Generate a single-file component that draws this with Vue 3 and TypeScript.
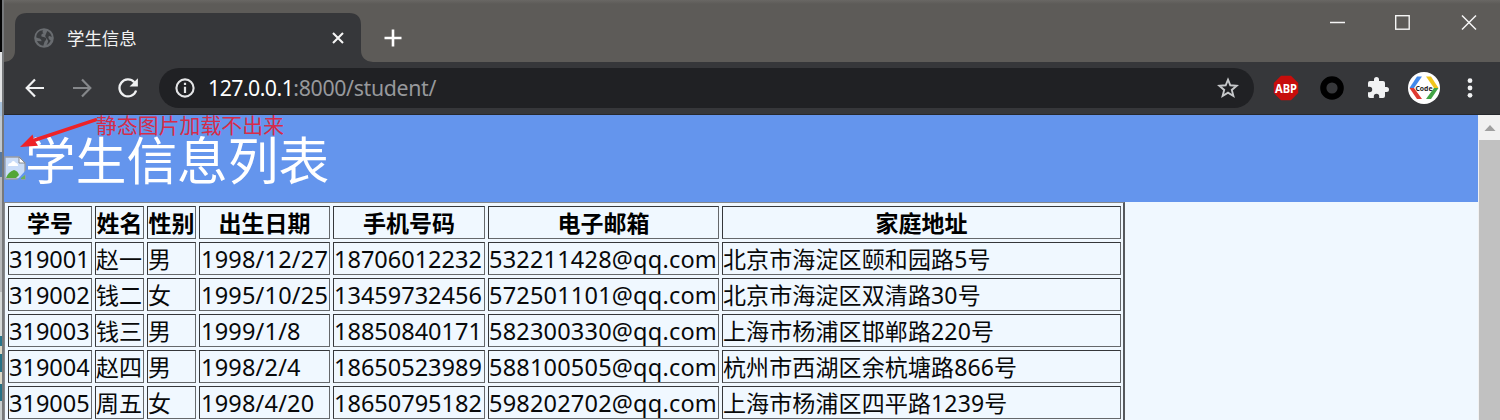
<script setup lang="ts">
interface Student {
  id: string
  name: string
  sex: string
  birth: string
  phone: string
  mail: string
  address: string
}

const headers: string[] = ['学号', '姓名', '性别', '出生日期', '手机号码', '电子邮箱', '家庭地址']

const students: Student[] = [
  { id: '319001', name: '赵一', sex: '男', birth: '1998/12/27', phone: '18706012232', mail: '532211428@qq.com', address: '北京市海淀区颐和园路5号' },
  { id: '319002', name: '钱二', sex: '女', birth: '1995/10/25', phone: '13459732456', mail: '572501101@qq.com', address: '北京市海淀区双清路30号' },
  { id: '319003', name: '钱三', sex: '男', birth: '1999/1/8', phone: '18850840171', mail: '582300330@qq.com', address: '上海市杨浦区邯郸路220号' },
  { id: '319004', name: '赵四', sex: '男', birth: '1998/2/4', phone: '18650523989', mail: '588100505@qq.com', address: '杭州市西湖区余杭塘路866号' },
  { id: '319005', name: '周五', sex: '女', birth: '1998/4/20', phone: '18650795182', mail: '598202702@qq.com', address: '上海市杨浦区四平路1239号' },
]
</script>

<template>
  <div class="screen">
    <div class="edge">
      <i class="e-black"></i><i class="e-white"></i><i class="e-sky"></i><i class="e-pale"></i>
      <i class="e-blue"></i><i class="e-gray"></i><i class="e-mist"></i><i class="e-teal"></i>
    </div>
    <div class="window">
      <div class="tabs">
        <svg class="tab-shape" width="372" height="62" viewBox="0 0 372 62">
          <path d="M0 62Q11 61 11 50V25Q11 13 23 13H345Q357 13 357 25V50Q357 61 369 62Z" fill="#36373a" />
        </svg>
        <div class="tab">
          <svg class="globe" width="20" height="20" viewBox="0 0 20 20">
            <circle cx="10" cy="10" r="9.8" fill="#696c70" />
            <path d="M2.3 9.4C2 5.500 5 2.300 9.300 2.200C8.200 3.200 8.300 4.600 9.600 5.200C7.700 5.500 7 6.700 7.500 8.500L10.400 9.300C12.500 9.800 12.800 11.200 11.600 12.500C10.200 13.400 10.300 15.300 9.300 17.700C6.600 17.500 4.100 15.700 3 13L7.500 13.200C7.600 11.500 6.300 10.400 4.500 10.200ZM13.200 3.100C15.800 4.300 17.500 6.600 17.700 9.200L15.900 8.100C14.700 7.900 14.200 8.700 14.500 10.100C14.800 11.400 15.700 11.800 16.700 12.500C15.800 14.600 14.500 16 12.500 17C13.600 14.800 14.600 13.900 13.700 12.100C13 10.700 11.500 9.500 11.200 7.800Z" fill="#393b3e" />
          </svg>
          <span class="tab-title">学生信息</span>
          <svg width="12" height="12" viewBox="0 0 12 12"><path d="M1 1L11 11M11 1L1 11" stroke="#f5f5f5" stroke-width="2.100" /></svg>
        </div>
        <svg class="plus" width="18" height="18" viewBox="0 0 18 18"><path d="M9 .5V17.500M.5 9H17.500" stroke="#fff" stroke-width="2.600" /></svg>
        <svg class="controls" width="150" height="18" viewBox="0 0 150 18">
          <path d="M1 9.500H16" stroke="#f5f5f5" stroke-width="1.500" />
          <rect x="66.700" y="2.700" width="13.500" height="13.500" fill="none" stroke="#f5f5f5" stroke-width="1.400" />
          <path d="M133 2.500L147 16.500M147 2.500L133 16.500" stroke="#f5f5f5" stroke-width="1.500" />
        </svg>
      </div>

      <div class="toolbar">
        <svg class="back" width="20" height="20" viewBox="0 0 20 20"><path d="M19 10H2M10 1.500L1.700 10L10 18.500" fill="none" stroke="#f0f1f2" stroke-width="2.200" /></svg>
        <svg class="forward" width="20" height="20" viewBox="0 0 20 20"><path d="M1 10H18M10 1.500L18.300 10L10 18.500" fill="none" stroke="#85878a" stroke-width="2.200" /></svg>
        <svg class="reload" width="20" height="20" viewBox="0 0 20 20">
          <path d="M16.300 4.200A8.500 8.500 0 1 0 18.100 12.500" fill="none" stroke="#f0f1f2" stroke-width="2.300" />
          <path d="M19.900 .3V8.600H11.600Z" fill="#f0f1f2" />
        </svg>
        <div class="omnibox">
          <svg width="20" height="20" viewBox="0 0 20 20">
            <circle cx="10" cy="10" r="8.600" fill="none" stroke="#e3e4e6" stroke-width="2.100" />
            <path d="M10 4.800V7M10 8.800V15" stroke="#e3e4e6" stroke-width="2.200" />
          </svg>
          <span class="url"><b>127.0.0.1</b>:8000/student/</span>
          <svg width="22" height="22" viewBox="0 0 22 22"><path d="M11 2.700L13.300 8.300L19.700 8.800L14.800 12.900L16.400 19L11 15.700L5.600 19L7.200 12.900L2.300 8.800L8.700 8.300Z" fill="none" stroke="#c6c8ca" stroke-width="1.900" /></svg>
        </div>
        <svg class="abp" width="26" height="26" viewBox="0 0 26 26">
          <path d="M8 .8H18L25.200 8V18L18 25.200H8L.8 18V8Z" fill="#c70d0b" />
          <text x="13" y="17.500" text-anchor="middle" textLength="22" lengthAdjust="spacingAndGlyphs" font-size="12.500" font-weight="700" fill="#fff">ABP</text>
        </svg>
        <svg class="ring" width="24" height="24" viewBox="0 0 24 24"><circle cx="12" cy="12" r="8.700" fill="#36373a" stroke="#000" stroke-width="6.200" /></svg>
        <svg class="puzzle" width="24" height="24" viewBox="0 0 24 24">
          <path d="M20.500 11H19V7a2 2 0 0 0-2-2h-4V3.500a2.500 2.500 0 0 0-5 0V5H4a2 2 0 0 0-2 2v3.800h1.500a2.700 2.700 0 0 1 0 5.400H2V20a2 2 0 0 0 2 2h3.800v-1.500a2.700 2.700 0 0 1 5.400 0V22H17a2 2 0 0 0 2-2v-4h1.500a2.500 2.500 0 0 0 0-5z" fill="#f1f2f3" />
        </svg>
        <svg class="avatar" width="32" height="32" viewBox="0 0 32 32">
          <circle cx="16" cy="16" r="16" fill="#fff" />
          <path d="M9 4.500H14L6 16H1.500Z" fill="#4189eb" />
          <path d="M1.500 16H6L14 27H9Z" fill="#df3a31" />
          <path d="M18 4.500H23L30.500 16H26Z" fill="#f0c51b" />
          <path d="M30.500 16H26L18 27H23Z" fill="#42a445" />
          <text x="16" y="18.600" text-anchor="middle" textLength="17" lengthAdjust="spacingAndGlyphs" font-size="7.500" font-weight="700" fill="#222">Code</text>
        </svg>
        <svg class="dots" width="6" height="20" viewBox="0 0 6 20"><circle cx="3" cy="2.700" r="2.400" /><circle cx="3" cy="10" r="2.400" /><circle cx="3" cy="17.300" r="2.400" /></svg>
      </div>

      <div class="viewport">
        <main class="page">
          <header class="banner">
            <svg class="broken" width="22" height="24" viewBox="0 0 22 24">
              <path d="M1 1H15L21 7V23H1Z" fill="#c9dcf8" stroke="#9a9da2" stroke-width="1.300" />
              <path d="M4 10Q4 7 7 7Q9 3 12 7Q14 7 14 10Z" fill="#fff" />
              <path d="M2 22Q4 16 10 14Q14 15 15 19L12 22Z" fill="#53a638" />
              <path d="M15 1V7H21Z" fill="#fff" stroke="#888b90" />
              <path d="M13 24L22 14V18L17 24Z" fill="#6495ed" />
              <path d="M17 22L21 19V23H17Z" fill="#6bb15a" />
            </svg>
            <h1>学生信息列表</h1>
            <div class="note">静态图片加载不出来</div>
            <svg class="arrow" width="82" height="34" viewBox="0 0 82 34">
              <path d="M77.500 2.800L17 23" stroke="#ee2228" stroke-width="3.500" stroke-linecap="round" />
              <path d="M2 30L14.500 17.500L16 23L20 28.800Z" fill="#ee2228" />
            </svg>
          </header>
          <div class="table">
            <div v-for="h in headers" :key="h" class="cell head">{{ h }}</div>
            <template v-for="s in students" :key="s.id">
              <div class="cell latin">{{ s.id }}</div>
              <div class="cell">{{ s.name }}</div>
              <div class="cell">{{ s.sex }}</div>
              <div class="cell latin birth">{{ s.birth }}</div>
              <div class="cell latin">{{ s.phone }}</div>
              <div class="cell latin mail">{{ s.mail }}</div>
              <div class="cell address">{{ s.address }}</div>
            </template>
          </div>
        </main>
        <div class="scrollbar">
          <svg width="22" height="25" viewBox="0 0 22 25"><path d="M6.500 16L12 10L17.500 16Z" fill="#a0a0a0" /></svg>
          <div class="thumb"></div>
        </div>
      </div>
    </div>
  </div>
</template>

<style>
body { margin: 0; overflow: hidden; }
</style>

<style scoped>
* { box-sizing: border-box; }
svg { display: block; flex: none; }
.screen { display: flex; width: 1500px; height: 420px; overflow: hidden; font-family: "Noto Sans", "Noto Sans CJK SC", sans-serif; }
.edge { width: 4px; flex: none; display: flex; flex-direction: column; border-right: 2px solid #77797b; }
.edge i { display: block; }
.e-black { height: 52px; background: #050505; }
.e-white { height: 50px; background: #e3e4e5; }
.e-sky { height: 14px; background: #a9c3dd; }
.e-pale { height: 36px; background: #c0c8d0; }
.e-blue { height: 25px; background: #58789e; }
.e-gray { height: 115px; background: #b8babc; }
.e-mist { height: 44px; background: #d6dad9; }
.e-teal { height: 84px; background: linear-gradient(#28758b 0 10px, #ddd9c8 10px 18px, #267186 18px 36px, #ddd9c8 36px 48px, #267186 48px 65px, #c8cecf 65px); }
.window { width: 1496px; flex: none; }
.tabs { position: relative; height: 62px; display: flex; background: linear-gradient(#696764 0, #5d5b58 4px, #5d5b58 100%); }
.tab-shape { position: absolute; left: 0; bottom: 0; }
.tab { position: relative; width: 357px; height: 49px; margin-top: 13px; padding: 0 17px 0 30px; display: flex; align-items: center; }
.tab-title { flex: 1; margin-left: 13px; color: #f2f2f2; font-size: 17.4px; line-height: 24px; }
.plus { margin: 29px 0 0 23px; }
.controls { margin: 13px 21px 0 auto; }
.toolbar { height: 53px; display: flex; align-items: center; padding: 0 0 1px 21px; background: #36373a; border-bottom: 1px solid #26282c; }
.forward { margin-left: 27px; }
.reload { margin-left: 26px; }
.omnibox { width: 1095px; height: 40px; flex: none; margin-left: 21px; padding: 0 15px 0 16px; border-radius: 20px; background: #202124; display: flex; align-items: center; }
.url { flex: 1; margin-left: 13px; font-size: 21.3px; line-height: 30px; color: #97999c; letter-spacing: -.32px; }
.url b { font-weight: 400; color: #fff; letter-spacing: -.55px; }
.abp { margin-left: 19px; }
.ring { margin-left: 21px; }
.puzzle { margin-left: 22px; }
.avatar { margin-left: 18px; }
.dots { margin-left: 27px; fill: #f1f2f3; }
.viewport { display: flex; height: 305px; }
.page { width: 1474px; flex: none; background: #f0f8ff; }
.banner { position: relative; height: 87px; display: flex; background: #6495ed; }
.broken { margin-top: 41px; }
h1 { margin: 21px 0 0 -1px; height: 50px; font-size: 50.7px; line-height: 50px; font-weight: 400; color: #fff; }
.note { position: absolute; left: 92px; top: 0; font-size: 20.9px; line-height: 21px; color: #d62c49; white-space: nowrap; }
.arrow { position: absolute; left: 14px; top: 2px; }
.table { width: 1121px; padding: 3px; border: 1px solid #85888c; border-right: 2px solid #56595d; border-bottom: 0; display: grid; grid-template-columns: 84px 49px 49px 131px 152px 231px 399px; grid-auto-rows: 33px; gap: 3px; }
.cell { border: 1px solid; border-color: #35373a #65686b #65686b #35373a; font-size: 23px; line-height: 33px; color: #08090a; white-space: nowrap; }
.head { display: flex; justify-content: center; font-weight: 700; color: #000; }
.latin { font-size: 23.5px; }
.birth { padding-left: 1px; letter-spacing: .2px; }
.mail { letter-spacing: .2px; }
.address { letter-spacing: .12px; }
.scrollbar { width: 22px; background: #f1f1f1; }
.thumb { width: 21px; height: 280px; margin-left: 1px; background: #c1c1c1; }
</style>
